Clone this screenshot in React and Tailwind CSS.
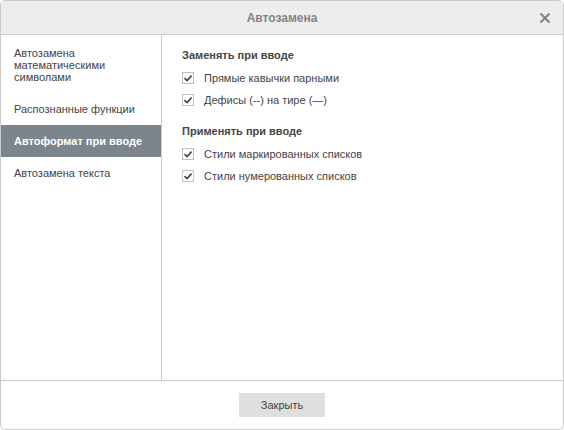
import React from 'react';

const SIDEBAR_ITEMS = [
  { id: 'math', label: 'Автозамена математическими символами' },
  { id: 'functions', label: 'Распознанные функции' },
  { id: 'autoformat', label: 'Автоформат при вводе', active: true },
  { id: 'text', label: 'Автозамена текста' },
];

const GROUPS = [
  {
    title: 'Заменять при вводе',
    options: ['Прямые кавычки парными', 'Дефисы (--) на тире (—)'],
  },
  {
    title: 'Применять при вводе',
    options: ['Стили маркированных списков', 'Стили нумерованных списков'],
  },
];

function Checkbox({ label }) {
  return (
    <label className="flex h-[22px] items-center gap-[10px]">
      <span className="flex h-[12px] w-[12px] items-center justify-center border border-[#c0c0c0] bg-white">
        <svg width="10" height="10" viewBox="0 0 10 10">
          <path d="M1.5 5.2 L4 7.6 L8.6 2.6" fill="none" stroke="#444" strokeWidth="1.6" />
        </svg>
      </span>
      <span className="text-[11px] leading-[12px] text-[#444]">{label}</span>
    </label>
  );
}

export default function App() {
  return (
    <div
      className="flex h-[430px] w-[564px] flex-col overflow-hidden rounded-[5px] border border-[#cbcbcb] bg-white"
      style={{ fontFamily: '"Liberation Sans", Arial, sans-serif' }}
    >
      {/* Заголовок */}
      <header className="relative flex h-[34px] shrink-0 items-center justify-center border-b border-[#cbcbcb] bg-[#ededed]">
        <span className="text-[12px] font-bold text-[#848484]">Автозамена</span>
        <button className="absolute right-[12px] top-[11px] flex h-[12px] w-[12px] items-center justify-center">
          <svg width="12" height="12" viewBox="0 0 12 12">
            <path d="M1.5 1.5 L10.5 10.5 M10.5 1.5 L1.5 10.5" stroke="#7d7d7d" strokeWidth="1.8" />
          </svg>
        </button>
      </header>

      <div className="flex min-h-0 flex-1">
        {/* Меню слева */}
        <nav className="w-[161px] shrink-0 border-r border-[#cbcbcb] pt-[2px]">
          {SIDEBAR_ITEMS.map((item) => (
            <div
              key={item.id}
              className={
                item.active
                  ? 'bg-[#7d858c] px-[13px] py-[10px] text-[11px] font-bold leading-[12px] text-white'
                  : 'px-[13px] py-[10px] text-[11px] leading-[12px] text-[#444]'
              }
            >
              {item.id === 'math' ? (
                <>
                  Автозамена
                  <br />
                  математическими
                  <br />
                  символами
                </>
              ) : (
                item.label
              )}
            </div>
          ))}
        </nav>

        {/* Параметры */}
        <main className="flex-1 pl-[20px] pt-[13px]">
          {GROUPS.map((group, idx) => (
            <section key={group.title} className={idx > 0 ? 'mt-[13px]' : ''}>
              <h3 className="text-[11px] font-bold leading-[14px] text-[#444]">{group.title}</h3>
              <div className="mt-[5px] flex flex-col">
                {group.options.map((opt) => (
                  <Checkbox key={opt} label={opt} />
                ))}
              </div>
            </section>
          ))}
        </main>
      </div>

      {/* Низ */}
      <footer className="flex h-[49px] shrink-0 items-center justify-center border-t border-[#cbcbcb]">
        <button className="h-[24px] w-[86px] bg-[#dfdfdf] text-[11px] text-[#444]">Закрыть</button>
      </footer>
    </div>
  );
}
